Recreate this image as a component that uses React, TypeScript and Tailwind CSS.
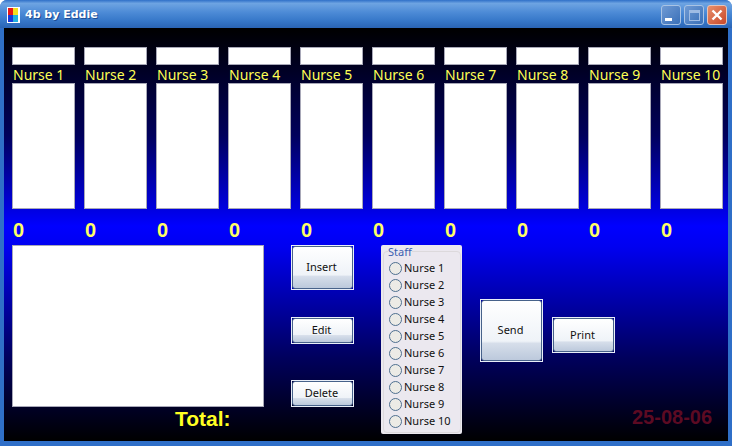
const nurses = ["Nurse 1", "Nurse 2", "Nurse 3", "Nurse 4", "Nurse 5", "Nurse 6", "Nurse 7", "Nurse 8", "Nurse 9", "Nurse 10"];

function XpButton({ label, className }: { label: string; className: string }) {
  return (
    <button className={`flex items-center justify-center border border-[#e8eef8] p-0 ${className}`}>
      <span className="flex h-full w-full items-center justify-center rounded-[3px] border border-[#47628a] bg-[linear-gradient(#ffffff_0%,#eff3f8_68%,#d6deea_72%,#bcc9dc_100%)] pr-[2px] text-[11px] text-[#111] [font-family:'Noto_Sans',sans-serif]">
        {label}
      </span>
    </button>
  );
}

function CaptionButton({ children, red }: { children: React.ReactNode; red?: boolean }) {
  return (
    <div className={`flex h-[20px] w-[20px] items-center justify-center rounded-[3px] border ${red ? "border-[#e8c4b8] bg-[linear-gradient(135deg,#e8906c,#c8482a)]" : "border-[#a9c3e4] bg-[linear-gradient(135deg,#6f9ad4,#3a70b8)]"}`}>
      {children}
    </div>
  );
}

export default function App() {
  return (
    <div className="flex h-[446px] w-[732px] flex-col overflow-hidden rounded-t-[7px] bg-[#2f6fc8]">
      {/* TITLE BAR */}
      <div className="flex h-[28px] shrink-0 items-center justify-between bg-[linear-gradient(#2f70c8_0%,#6ea4e2_12%,#4c8ad6_45%,#3677c8_75%,#2a64b4_100%)] pl-[6px] pr-[5px] pt-[2px]">
        <div className="flex items-center gap-[4px]">
          <svg width="15" height="18" viewBox="0 0 15 18">
            <rect x="1" y="1" width="13" height="16" fill="#fff" />
            <rect x="2" y="2" width="5" height="7" fill="#e81818" />
            <rect x="7" y="2" width="5" height="7" fill="#f4e020" />
            <rect x="2" y="9" width="5" height="7" fill="#1838d8" />
            <rect x="7" y="9" width="5" height="7" fill="#20b0e0" />
          </svg>
          <span className="text-[11px] font-bold text-white [font-family:'DejaVu_Sans',sans-serif] [text-shadow:1px_1px_0_#1c4c94]">4b by Eddie</span>
        </div>
        <div className="flex gap-[3px]">
          <CaptionButton>
            <div className="mt-[9px] mr-[5px] h-[3px] w-[7px] bg-white" />
          </CaptionButton>
          <CaptionButton>
            <div className="h-[11px] w-[11px] border border-t-[3px] border-[#9fbce4]" />
          </CaptionButton>
          <CaptionButton red>
            <svg width="12" height="12" viewBox="0 0 12 12">
              <path d="M1.5 1.5 L10.5 10.5 M10.5 1.5 L1.5 10.5" stroke="#fff" strokeWidth="2.4" />
            </svg>
          </CaptionButton>
        </div>
      </div>

      {/* BODY */}
      <div className="mx-[4px] mb-[5px] flex-1 bg-[linear-gradient(#000000_0%,#00005c_26%,#0000ff_48%,#0000f0_53%,#00005c_80%,#000000_100%)] pl-[8px] pt-[19px]">
        <div className="flex gap-[9px]">
          {nurses.map((n) => (
            <div key={n} className="flex w-[63px] flex-col">
              <div className="h-[18px] border border-[#a8a8b8] bg-white" />
              <div className="flex h-[18px] items-center whitespace-nowrap pl-px text-[14px] text-[#ffff55] [font-family:'Noto_Sans',sans-serif]">{n}</div>
              <div className="h-[126px] border border-[#a8a8b8] bg-white" />
              <div className="mt-[9px] h-[27px] pl-px text-[20px] font-bold leading-[24px] text-[#ffff66] [font-family:'Liberation_Sans',sans-serif]">0</div>
            </div>
          ))}
        </div>

        <div className="flex items-start">
          <div className="flex w-[252px] flex-col">
            <div className="h-[162px] border border-[#a8a8b8] bg-white" />
            <div className="pl-[163px] text-[21px] font-bold leading-[24px] text-[#ffff22] [font-family:'Liberation_Sans',sans-serif]">Total:</div>
          </div>

          <div className="ml-[27px] flex w-[63px] flex-col">
            <XpButton label="Insert" className="h-[45px] w-[63px]" />
            <XpButton label="Edit" className="mt-[27px] h-[27px] w-[63px]" />
            <XpButton label="Delete" className="mt-[36px] h-[27px] w-[63px]" />
          </div>

          <div className="ml-[27px] h-[189px] w-[81px] rounded-[2px] bg-[#ebe8ef] pb-px pl-[2px] pr-px">
            <fieldset className="h-full rounded-[4px] border border-[#dcd9dc] pl-[5px]">
              <legend className="-ml-[1px] text-[11px] leading-[13px] text-[#3a5fb0] [font-family:'Noto_Sans',sans-serif]">Staff</legend>
              <div className="mt-[2px] flex flex-col">
                {nurses.map((n) => (
                  <div key={n} className="flex h-[17px] items-center gap-[2px] whitespace-nowrap text-[11px] text-[#111] [font-family:'Noto_Sans',sans-serif]">
                    <span className="h-[13px] w-[13px] shrink-0 rounded-full border border-[#4f7090] bg-[#ecebe6]" />
                    {n}
                  </div>
                ))}
              </div>
            </fieldset>
          </div>

          <XpButton label="Send" className="ml-[18px] mt-[54px] h-[63px] w-[63px]" />
          <XpButton label="Print" className="ml-[9px] mt-[72px] h-[36px] w-[63px]" />

          <div className="ml-[17px] flex h-[183px] items-end text-[20px] font-bold leading-[22px] text-[#5c0a22] [font-family:'Liberation_Sans',sans-serif]">25-08-06</div>
        </div>
      </div>
    </div>
  );
}
